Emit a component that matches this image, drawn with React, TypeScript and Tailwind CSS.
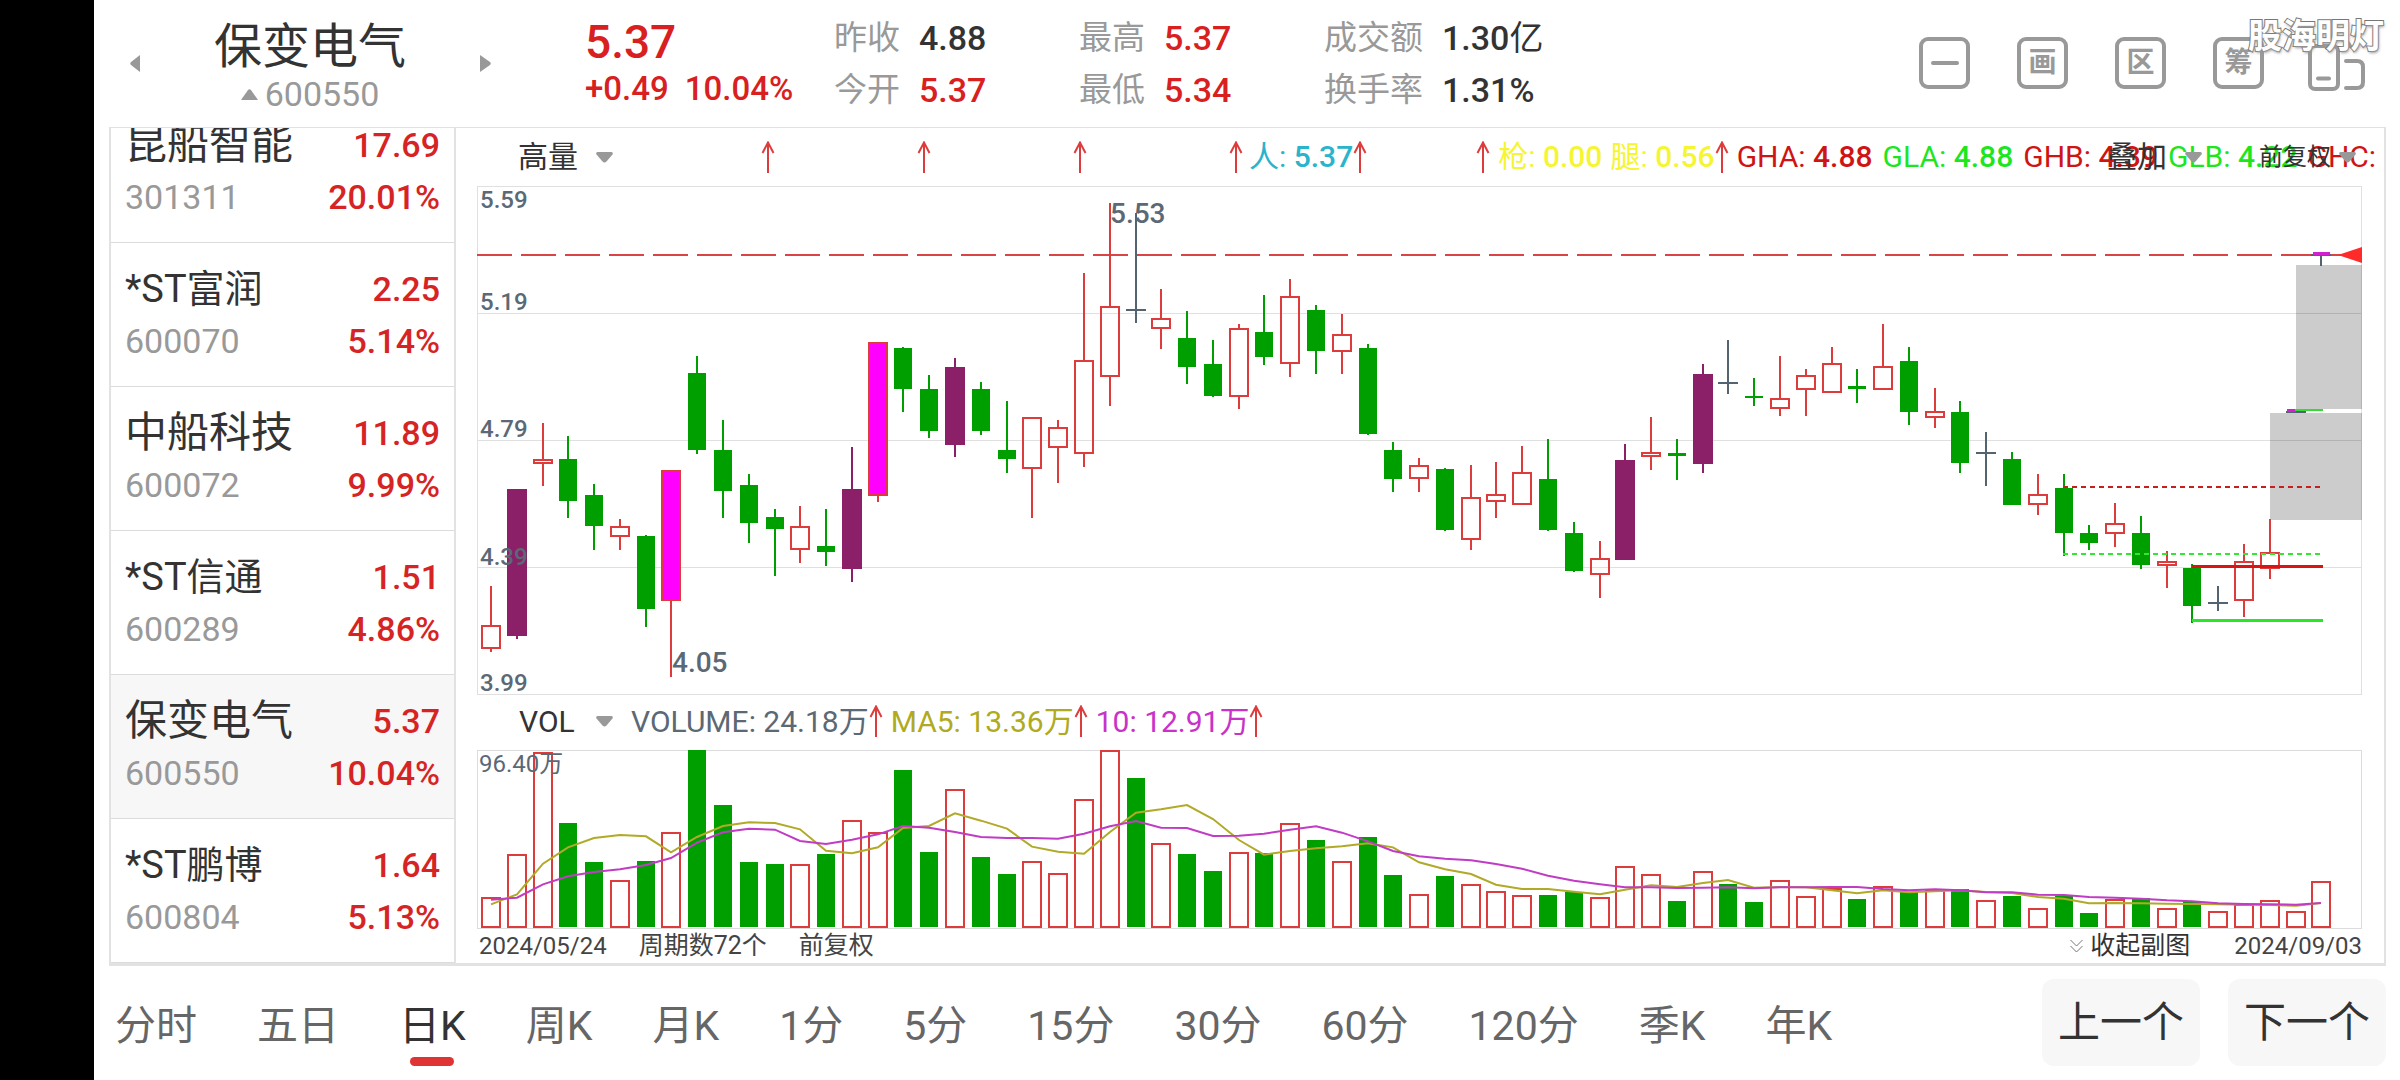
import React from 'react';

type Kind = 'up' | 'down' | 'high' | 'limit' | 'flat';
type Candle = [kind: Kind, top: number, bottom: number, high: number, low: number];

// Levels count downwards, 178 is the top edge of the price frame
const candles: Candle[] = [
  ['up', 1364, 1429, 1260, 1438],
  ['high', 996, 1394, 996, 1403],
  ['up', 915, 929, 819, 988],
  ['down', 916, 1029, 854, 1076],
  ['down', 1012, 1098, 983, 1161],
  ['up', 1096, 1126, 1078, 1161],
  ['down', 1125, 1322, 1121, 1369],
  ['limit', 945, 1300, 945, 1506],
  ['down', 684, 891, 638, 903],
  ['down', 891, 1003, 811, 1076],
  ['down', 987, 1089, 957, 1144],
  ['down', 1073, 1106, 1052, 1231],
  ['up', 1096, 1161, 1044, 1196],
  ['down', 1150, 1167, 1052, 1206],
  ['high', 996, 1214, 884, 1248],
  ['limit', 600, 1015, 600, 1032],
  ['down', 615, 727, 612, 790],
  ['down', 727, 839, 689, 860],
  ['high', 668, 877, 642, 911],
  ['down', 727, 840, 707, 851],
  ['down', 891, 916, 759, 954],
  ['up', 803, 944, 803, 1076],
  ['up', 829, 885, 811, 980],
  ['up', 648, 902, 414, 937],
  ['up', 501, 694, 223, 773],
  ['flat', 512, 512, 250, 549],
  ['up', 536, 565, 457, 619],
  ['down', 589, 667, 516, 713],
  ['down', 658, 745, 595, 748],
  ['up', 562, 747, 552, 781],
  ['down', 572, 641, 473, 661],
  ['up', 476, 660, 430, 695],
  ['down', 512, 623, 500, 687],
  ['up', 578, 626, 525, 687],
  ['down', 615, 849, 604, 852],
  ['down', 891, 969, 871, 1006],
  ['up', 933, 971, 914, 1006],
  ['down', 944, 1107, 940, 1111],
  ['up', 1019, 1135, 931, 1161],
  ['up', 1010, 1031, 923, 1076],
  ['up', 950, 1040, 880, 1040],
  ['down', 969, 1107, 862, 1111],
  ['down', 1117, 1219, 1087, 1222],
  ['up', 1183, 1229, 1138, 1291],
  ['high', 918, 1188, 876, 1188],
  ['up', 898, 911, 801, 946],
  ['down', 900, 907, 862, 972],
  ['high', 686, 929, 660, 953],
  ['flat', 711, 711, 595, 739],
  ['down', 745, 752, 698, 773],
  ['up', 751, 780, 638, 799],
  ['up', 690, 729, 673, 799],
  ['up', 656, 738, 612, 738],
  ['down', 719, 726, 673, 765],
  ['up', 664, 729, 552, 729],
  ['down', 650, 788, 612, 825],
  ['up', 787, 806, 725, 833],
  ['down', 789, 926, 759, 954],
  ['flat', 899, 899, 844, 989],
  ['down', 917, 1039, 896, 1041],
  ['up', 1010, 1041, 957, 1067],
  ['down', 994, 1116, 957, 1179],
  ['down', 1117, 1142, 1095, 1163],
  ['up', 1089, 1118, 1035, 1153],
  ['down', 1117, 1201, 1070, 1214],
  ['up', 1191, 1204, 1165, 1265],
  ['down', 1211, 1314, 1199, 1360],
  ['flat', 1306, 1306, 1259, 1326],
  ['up', 1192, 1299, 1146, 1344],
  ['up', 1166, 1213, 1078, 1240],
  ['flat', 788, 788, 788, 788],
  ['flat', 364, 364, 360, 394],
];

const volumes: number[] = [
  620, 491, 184, 399, 516, 570, 511, 424, 178, 345, 516, 522, 522, 490, 388, 426, 240, 484,
  295, 500, 550, 511, 548, 326, 175, 264, 459, 490, 541, 486, 487, 399, 450, 511, 441, 555,
  612, 558, 580, 601, 615, 614, 606, 620, 526, 552, 632, 543, 581, 636, 568, 616, 592, 626,
  586, 605, 596, 596, 630, 618, 654, 618, 668, 627, 622, 654, 632, 661, 642, 630, 661, 572,
];

const fallingVolume = new Set([
  3, 4, 6, 8, 9, 10, 11, 13, 16, 17, 19, 20, 25, 27, 28, 30, 32, 34, 35, 37, 41, 42, 46, 48, 49,
  53, 55, 57, 59, 61, 62, 64, 66,
]);

const ma5: number[] = [
  642, 612, 520, 471, 443, 434, 438, 486, 440, 407, 396, 398, 417, 481, 489, 471, 413, 407,
  369, 391, 415, 469, 484, 490, 425, 367, 357, 344, 386, 449, 493, 482, 474, 468, 459, 471,
  516, 537, 551, 583, 596, 596, 604, 612, 598, 585, 590, 578, 569, 592, 590, 591, 600, 609,
  600, 606, 603, 600, 605, 608, 620, 625, 639, 638, 639, 640, 641, 642, 643, 644, 646, 638,
];

const ma10: number[] = [
  628, 622, 582, 558, 545, 537, 524, 503, 457, 426, 415, 418, 452, 461, 448, 432, 407, 412,
  425, 440, 443, 443, 445, 430, 408, 392, 412, 413, 437, 436, 430, 418, 408, 427, 453, 482,
  498, 505, 510, 521, 535, 556, 571, 582, 591, 591, 593, 592, 591, 594, 591, 591, 590, 590,
  596, 600, 597, 600, 606, 606, 613, 614, 620, 622, 625, 630, 633, 639, 641, 642, 643, 638,
];

const stocks = [
  { name: '昆船智能', code: '301311', price: '17.69', change: '20.01%' },
  { name: '*ST富润', code: '600070', price: '2.25', change: '5.14%' },
  { name: '中船科技', code: '600072', price: '11.89', change: '9.99%' },
  { name: '*ST信通', code: '600289', price: '1.51', change: '4.86%' },
  { name: '保变电气', code: '600550', price: '5.37', change: '10.04%' },
  { name: '*ST鹏博', code: '600804', price: '1.64', change: '5.13%' },
];

const stats = [
  [
    { label: '昨收', value: '4.88', red: false },
    { label: '今开', value: '5.37', red: true },
  ],
  [
    { label: '最高', value: '5.37', red: true },
    { label: '最低', value: '5.34', red: true },
  ],
  [
    { label: '成交额', value: '1.30', unit: '亿', red: false },
    { label: '换手率', value: '1.31%', red: false },
  ],
];

const periods = ['分时', '五日', '日K', '周K', '月K', '1分', '5分', '15分', '30分', '60分', '120分', '季K', '年K'];

const colors: Record<Kind, string> = {
  up: '#dc3c3c',
  down: '#009f00',
  high: '#8b2068',
  limit: '#ff00ff',
  flat: '#53636f',
};

const xAt = (i: number) => Math.round(14 + i * 25.78);
const priceY = (level: number) => Math.round((level - 178) * 0.37);
const volumeY = (level: number) => (level - 179) / 3;
const linePoints = (levels: number[]) => levels.map((v, i) => `${xAt(i)},${volumeY(v)}`).join(' ');

const UpArrow = () => (
  <svg className="w-[14px] h-8 shrink-0" viewBox="0 0 14 32" fill="none" stroke="#dc3c3c" strokeWidth="2">
    <path d="M7 32V2M1.500 12L7 1.500L12.500 12" />
  </svg>
);

const Caret = () => (
  <svg className="w-[17px] h-[11px] shrink-0 pointer-events-none" viewBox="0 0 17 11" fill="#999">
    <path d="M1.500 0H15.500Q17.500 .5 16.500 2.500L10.500 9.500Q8.500 11.500 6.500 9.500L.5 2.500Q-.5 .5 1.500 0Z" />
  </svg>
);

const CandleShape = ({ candle, index }: { candle: Candle; index: number }) => {
  const [kind, top, bottom, high, low] = candle;
  const x = xAt(index);
  const color = colors[kind];
  const y1 = priceY(top);
  const y2 = priceY(bottom);

  if (kind === 'flat') {
    return (
      <path d={`M${x - 10} ${y1}H${x + 10}M${x} ${priceY(high)}V${priceY(low)}`} stroke={color} strokeWidth="2" />
    );
  }
  if (kind === 'up' || kind === 'limit') {
    return (
      <g stroke={colors.up} strokeWidth="2" fill={kind === 'limit' ? color : 'none'}>
        <path d={`M${x} ${priceY(high)}V${y1}M${x} ${y2}V${priceY(low)}`} />
        <rect x={x - 9} y={y1 + 1} width="18" height={Math.max(y2 - y1 - 2, 2)} />
      </g>
    );
  }
  const half = kind === 'high' ? 10 : 9;
  return (
    <g fill={color}>
      <rect x={x - 1} y={priceY(high)} width="2" height={priceY(low) - priceY(high)} />
      <rect x={x - half} y={y1} width={half * 2} height={y2 - y1} />
    </g>
  );
};

const PriceChart = () => (
  <svg className="block w-full h-auto" viewBox="0 0 1885 510" fill="none" role="img" aria-label="日K线">
    <g stroke="#e0e0e0">
      <rect x=".5" y=".5" width="1884" height="508" />
      <path d="M0 127.500H1885M0 254.500H1885M0 381.500H1885" />
    </g>

    {/* Gap zones */}
    <rect x="1819" y="79" width="66" height="144" fill="#000" fillOpacity=".2" />
    <rect x="1793" y="227" width="92" height="107" fill="#000" fillOpacity=".2" />

    <path d="M0 69H1865" stroke="#d94444" strokeWidth="2" strokeDasharray="35 9" />
    <path d="M1861 69L1885 61V77Z" fill="#ff2a2a" />

    {candles.map((candle, i) => (
      <CandleShape key={i} candle={candle} index={i} />
    ))}

    <path d="M1586 301H1846" stroke="#c81e1e" strokeWidth="2" strokeDasharray="5 4" />
    <path d="M1586 368H1846" stroke="#32e632" strokeWidth="2" strokeDasharray="5 4" />
    <path d="M1715 380.500H1846" stroke="#d81414" strokeWidth="3" />
    <path d="M1715 434.500H1846" stroke="#28e628" strokeWidth="3" />
    <path d="M1818 224H1846" stroke="#32dc32" strokeWidth="2" />
    <path d="M1810 224.500H1818M1836 67.500H1853" stroke="#d020d0" strokeWidth="3" />

    <g className="text-[24px] font-medium" fill="#5b6875">
      <text x="3" y="22">5.59</text>
      <text x="3" y="124">5.19</text>
      <text x="3" y="251">4.79</text>
      <text x="3" y="379">4.39</text>
      <text x="3" y="505">3.99</text>
    </g>
    <g className="text-[28px] font-medium" fill="#5b6875">
      <text x="633" y="37">5.53</text>
      <text x="195" y="486">4.05</text>
    </g>
  </svg>
);

const VolumeChart = () => (
  <svg className="block w-full h-auto" viewBox="0 0 1885 179" fill="none" role="img" aria-label="成交量">
    <rect x=".5" y=".5" width="1884" height="178" stroke="#dcdcdc" />
    {volumes.map((v, i) => {
      const y = Math.max(Math.round(volumeY(v)), 0);
      return fallingVolume.has(i) ? (
        <rect key={i} x={xAt(i) - 9} y={y} width="18" height={177 - y} fill={colors.down} />
      ) : (
        <rect key={i} x={xAt(i) - 9} y={y + 1} width="18" height={176 - y} stroke={colors.up} strokeWidth="2" />
      );
    })}
    <polyline points={linePoints(ma5)} stroke="#b0aa28" strokeWidth="2" />
    <polyline points={linePoints(ma10)} stroke="#c03cc4" strokeWidth="2" />
    <text x="2" y="22" className="text-[24px]" fill="#5b6875">96.40万</text>
  </svg>
);

const Indicator = ({ label, value, className }: { label: string; value: string; className: string }) => (
  <span className={`shrink-0 whitespace-pre ${className}`}>
    {label}: {value}
  </span>
);

const Quote = ({ label, value, className = '' }: { label: string; value: string; className?: string }) => (
  <span className={`shrink-0 whitespace-pre ${className}`}>
    {label}: <span className="font-medium">{value}</span>
  </span>
);

const Header = () => (
  <header className="relative flex items-start h-[127px] pl-9 pr-[35px]">
    <button aria-label="上一只" className="mt-[55px]">
      <svg className="w-[10px] h-[17px]" viewBox="0 0 10 17" fill="#999">
        <path d="M10 0V17L1 10Q-.5 8.500 1 7Z" />
      </svg>
    </button>
    <div className="w-[340px] pt-5 text-center">
      <h1 className="text-[48px] leading-[54px] font-normal text-[#333]">保变电气</h1>
      <p className="flex items-center justify-center gap-[7px] text-[34px] leading-10 text-[#999]">
        <svg className="w-[17px] h-[11px]" viewBox="0 0 17 11" fill="#999">
          <path d="M0 11L7 1Q8.500-.5 10 1L17 11Z" />
        </svg>
        600550
      </p>
    </div>
    <button aria-label="下一只" className="mt-[55px]">
      <svg className="w-[11px] h-[17px]" viewBox="0 0 11 17" fill="#999">
        <path d="M0 0V17L10 10Q11.500 8.500 10 7Z" />
      </svg>
    </button>

    <div className="ml-[94px] w-[249px] pt-[18px] text-[#d92020]">
      <p className="text-[46px] leading-[48px] font-medium">5.37</p>
      <p className="flex gap-4 text-[33px] leading-[46px] font-medium">
        <span>+0.49</span>
        <span>10.04%</span>
      </p>
    </div>

    {stats.map((column, i) => (
      <dl key={i} className="w-[245px] pt-3 text-[34px] leading-[52px]">
        {column.map((item) => (
          <div key={item.label} className="flex gap-[19px] whitespace-nowrap">
            <dt className="text-[33px] text-[#999]">{item.label}</dt>
            <dd className={item.red ? 'font-medium text-[#d92020]' : 'font-medium text-[#333]'}>
              {item.value}
              {'unit' in item && <span className="font-normal">{item.unit}</span>}
            </dd>
          </div>
        ))}
      </dl>
    ))}

    <div className="ml-auto mt-[37px] flex gap-[47px] text-[28px] font-bold text-[#999]">
      <button aria-label="横线" className="flex items-center justify-center w-[51px] h-[52px] border-4 border-[#999] rounded-[9px]">
        <span className="w-7 h-1 rounded-full bg-[#999]" />
      </button>
      {['画', '区', '筹'].map((tool) => (
        <button key={tool} className="flex items-center justify-center w-[51px] h-[52px] border-4 border-[#999] rounded-[9px]">
          {tool}
        </button>
      ))}
      <button aria-label="旋转屏幕" className="-ml-[3px]">
        <svg className="w-[57px] h-[54px]" viewBox="0 0 57 54" fill="none" stroke="#999" strokeWidth="4" strokeLinecap="round">
          <rect x="2" y="9" width="28" height="43" rx="5" />
          <path d="M10 41.500H21M38 24H49Q55 24 55 30V45Q55 51 49 51H38M16 2H30Q38 2 42 9" />
        </svg>
      </button>
    </div>
    <span className="absolute right-4 top-3 text-[34px] leading-12 font-bold text-white [-webkit-text-stroke:2px_#777] [paint-order:stroke_fill] [text-shadow:1px_2px_3px_#999]">
      股海明灯
    </span>
  </header>
);

const StockList = () => (
  <ul className="w-[347px] shrink-0 overflow-hidden border-x-2 border-[#e2e2e2]">
    {stocks.map((stock, i) => (
      <li key={stock.code} className={i === 0 ? '-mt-[29px]' : ''}>
        <button
          className={`flex justify-between w-full h-36 pt-5 px-[14px] border-b border-[#dcdcdc] leading-[52px] ${
            stock.code === '600550' ? 'bg-[#f7f7f7]' : ''
          }`}
        >
          <span className="flex flex-col items-start">
            <span className={`text-[#333] ${stock.name.startsWith('*') ? 'text-[38px]' : 'text-[42px]'}`}>
              {stock.name}
            </span>
            <span className="text-[34px] text-[#999]">{stock.code}</span>
          </span>
          <span className="flex flex-col items-end text-[34px] font-medium text-[#d62424]">
            <span>{stock.price}</span>
            <span>{stock.change}</span>
          </span>
        </button>
      </li>
    ))}
  </ul>
);

const PriceToolbar = () => (
  <div className="relative flex items-center h-[58px] pl-[41px] -mr-[23px] overflow-hidden text-[30px] leading-[58px]">
    <select aria-label="主图指标" className="appearance-none shrink-0 w-[78px] text-[#333]">
      <option>高量</option>
    </select>
    <Caret />
    <div className="flex shrink-0 items-center pl-[148px]">
      <div className="flex gap-[142px]">
        <UpArrow />
        <UpArrow />
        <UpArrow />
        <UpArrow />
      </div>
      <Quote label="人" value="5.37" className="ml-[6px] text-[#2ab4cc]" />
      <UpArrow />
      <span className="w-[109px]" />
      <UpArrow />
      <span className="flex gap-2 pl-2 text-[#f5f532]">
        <Quote label="枪" value="0.00" />
        <Quote label="腿" value="0.56" />
      </span>
      <UpArrow />
      <div className="flex gap-[10px] pl-2">
        <Quote label="GHA" value="4.88" className="text-[#cf1414]" />
        <Quote label="GLA" value="4.88" className="text-[#1ee61e]" />
        <Quote label="GHB" value="4.39" className="text-[#cf1414]" />
        <Quote label="GLB" value="4.22" className="text-[#1ee61e]" />
        <span className="text-[#cf1414]">GHC:</span>
      </div>
    </div>
    <div className="absolute right-[29px] top-0 flex items-center h-full text-[#333]">
      <select aria-label="叠加" className="appearance-none w-[78px]">
        <option>叠加</option>
      </select>
      <Caret />
      <select aria-label="复权方式" className="appearance-none w-[80px] ml-[57px] text-2xl">
        <option>前复权</option>
      </select>
      <Caret />
    </div>
  </div>
);

const VolumeToolbar = () => (
  <div className="flex items-center h-[54px] pl-[42px] pb-1 text-[30px]">
    <select aria-label="副图指标" className="appearance-none shrink-0 w-[77px] text-[#333]">
      <option>VOL</option>
    </select>
    <Caret />
    <Indicator label="VOLUME" value="24.18万" className="ml-[18px] text-[#5b6875]" />
    <UpArrow />
    <Indicator label="MA5" value="13.36万" className="ml-2 text-[#b0aa20]" />
    <UpArrow />
    <Indicator label="10" value="12.91万" className="ml-2 text-[#c832c8]" />
    <UpArrow />
  </div>
);

const Footer = () => (
  <div className="flex items-center h-[34px] text-[25px] text-[#444]">
    <span className="pl-[2px] text-2xl">2024/05/24</span>
    <span className="ml-8">周期数72个</span>
    <span className="ml-8">前复权</span>
    <button className="flex items-center gap-[7px] ml-auto text-[#333]">
      <svg className="w-[13px] h-[14px]" viewBox="0 0 13 14" fill="none" stroke="#777">
        <path d="M.5 1L6.500 7L12.500 1M.5 7L6.500 13L12.500 7" />
      </svg>
      收起副图
    </button>
    <span className="ml-11 text-2xl">2024/09/03</span>
  </div>
);

const PeriodTabs = () => (
  <nav className="flex items-start justify-between pt-[13px] pl-[6px] pb-[14px]">
    <div className="flex gap-[60px] text-[41px] leading-[54px]">
      {periods.map((period) => (
        <button
          key={period}
          className={`flex flex-col items-center pt-5 whitespace-nowrap ${
            period === '日K' ? 'text-[#333]' : 'text-[#666]'
          }`}
        >
          {period}
          {period === '日K' && <span className="mt-1 w-11 h-[9px] rounded-full bg-[#e03434]" />}
        </button>
      ))}
    </div>
    <div className="flex shrink-0 gap-7 text-[42px] text-[#333]">
      <button className="w-[158px] h-[87px] rounded-xl bg-[#f7f7f7]">上一个</button>
      <button className="w-[158px] h-[87px] rounded-xl bg-[#f7f7f7]">下一个</button>
    </div>
  </nav>
);

export default function App() {
  return (
    <div className="flex min-h-screen bg-white font-['Roboto','Noto_Sans_CJK_SC',sans-serif]">
      <div className="w-[94px] shrink-0 bg-black" />
      <div className="flex-1 min-w-0">
        <Header />
        <div className="pl-[15px] pr-[14px]">
          <main className="flex border-t border-b-3 border-[#e2e2e2]">
            <StockList />
            <section className="flex-1 min-w-0 pl-[21px] pr-[22px] border-r-2 border-[#e2e2e2]">
              <PriceToolbar />
              <PriceChart />
              <VolumeToolbar />
              <VolumeChart />
              <Footer />
            </section>
          </main>
          <PeriodTabs />
        </div>
      </div>
    </div>
  );
}
